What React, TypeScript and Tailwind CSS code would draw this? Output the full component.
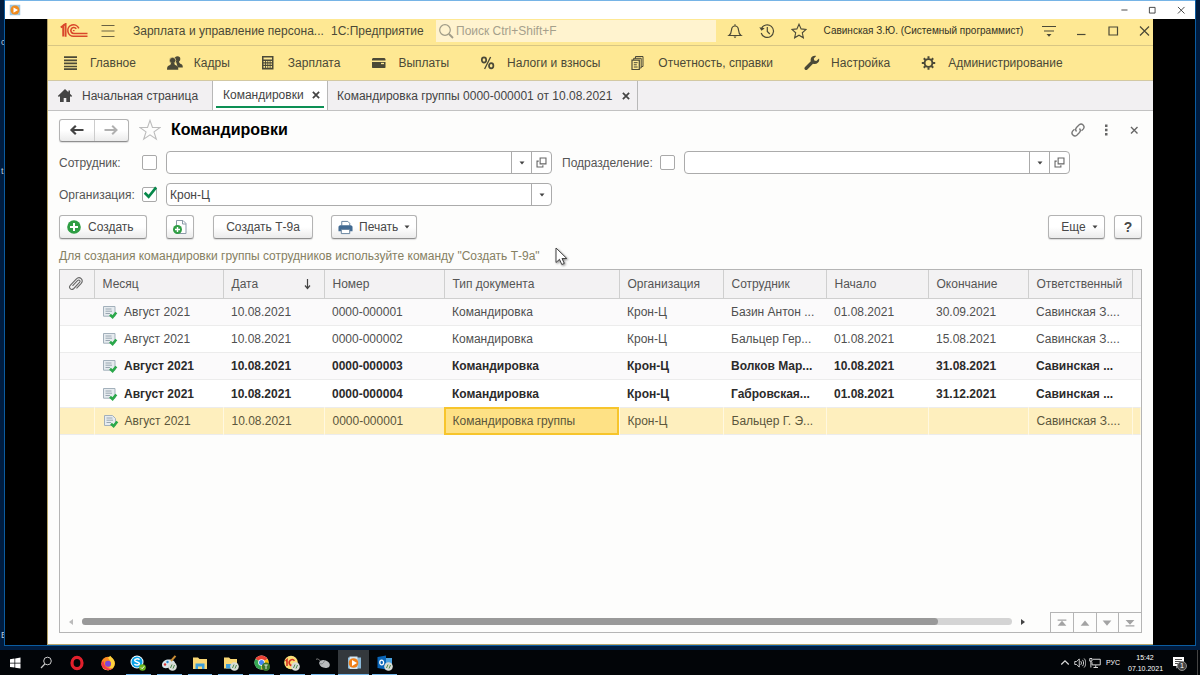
import React, { useState, ReactNode } from "react";

interface Trip {
  month: string;
  date: string;
  number: string;
  type: string;
  org: string;
  employee: string;
  start: string;
  end: string;
  owner: string;
  bold?: boolean;
  selected?: boolean;
}

const trips: Trip[] = [
  { month: "Август 2021", date: "10.08.2021", number: "0000-000001", type: "Командировка", org: "Крон-Ц", employee: "Базин Антон ...", start: "01.08.2021", end: "30.09.2021", owner: "Савинская З...." },
  { month: "Август 2021", date: "10.08.2021", number: "0000-000002", type: "Командировка", org: "Крон-Ц", employee: "Бальцер Гер...", start: "01.08.2021", end: "15.08.2021", owner: "Савинская З...." },
  { month: "Август 2021", date: "10.08.2021", number: "0000-000003", type: "Командировка", org: "Крон-Ц", employee: "Волков Мар...", start: "10.08.2021", end: "31.08.2021", owner: "Савинская ...", bold: true },
  { month: "Август 2021", date: "10.08.2021", number: "0000-000004", type: "Командировка", org: "Крон-Ц", employee: "Габровская...", start: "01.08.2021", end: "31.12.2021", owner: "Савинская ...", bold: true },
  { month: "Август 2021", date: "10.08.2021", number: "0000-000001", type: "Командировка группы", org: "Крон-Ц", employee: "Бальцер Г. Э...", start: "", end: "", owner: "Савинская З....", selected: true },
];

interface SvgProps {
  className?: string;
  children: ReactNode;
}

const Svg: React.FC<SvgProps> = ({ className = "size-4", children }) => (
  <svg viewBox="0 0 16 16" fill="none" className={`${className} shrink-0`} aria-hidden="true">
    {children}
  </svg>
);

const LogoIcon = () => (
  <svg viewBox="0 0 28 15" className="w-7 h-[15px] shrink-0" fill="none" stroke="#d9472b" strokeWidth="1.6" aria-label="1С">
    <path d="M.8 4.600 3.200 2.700v10.800M3.200 2.300 5.600 1v12.700" strokeWidth="1.900" />
    <path d="M18.800 5.400A5.700 5.700 0 1 0 14 13.200H27.500" />
    <path d="M16.300 5.800a3 3 0 1 0-2.500 4.700H27.500" />
    <path d="M14.600 7.600h-1.700" strokeWidth="1.200" />
  </svg>
);

const menuItems: { label: string; icon: ReactNode }[] = [
  {
    label: "Главное",
    icon: (
      <Svg>
        <path d="M1 2.200h13M1 5.300h13M1 8.400h13M1 11.500h13M1 14.200h13" stroke="#4b4937" strokeWidth="1.700" />
      </Svg>
    ),
  },
  {
    label: "Кадры",
    icon: (
      <Svg>
        <g fill="#4b4937">
          <circle cx="10.500" cy="4" r="2.800" />
          <path d="M8.800 6h3.200c0 2 .8 2.500 2.500 3.200 1 .5 1.300 1.500 1.300 3.300h-5z" />
          <circle cx="5.600" cy="5.500" r="3.200" stroke="#fee893" strokeWidth=".7" />
          <path d="M0 14.800c0-2.800.6-3.800 2-4.300 1.600-.5 2-1.200 2-2.500h3.300c0 1.300.4 2 2 2.500 1.500.5 2 1.500 2 4.300z" />
        </g>
      </Svg>
    ),
  },
  {
    label: "Зарплата",
    icon: (
      <Svg>
        <path d="M1 1h11.500v13.500H1z" fill="#4b4937" />
        <path d="M2.500 2.500h8.500v2H2.500zM2.500 6H4v1.300H2.500zM4.900 6h1.500v1.300H4.900zM7.200 6h1.500v1.300H7.200zM9.500 6H11v1.300H9.500zM2.500 8.400H4v1.300H2.500zM4.900 8.400h1.500v1.300H4.900zM7.200 8.400h1.500v1.300H7.200zM9.500 8.400H11v1.300H9.500zM2.500 11H4v1.800H2.500zM4.900 11h1.500v1.800H4.900zM7.200 11h1.500v1.800H7.200zM9.500 11H11v1.800H9.500z" fill="#fee893" />
      </Svg>
    ),
  },
  {
    label: "Выплаты",
    icon: (
      <Svg>
        <path d="M2 3h11.500l1 1v1.500H1V4zM1 7h13.500v5.500l-.5.500H1.500L1 12.500z" fill="#4b4937" />
        <path d="M10 8.500h3" stroke="#fee893" strokeWidth="1.300" />
      </Svg>
    ),
  },
  {
    label: "Налоги и взносы",
    icon: (
      <Svg>
        <g stroke="#4b4937">
          <ellipse cx="4" cy="5" rx="2.200" ry="2.600" strokeWidth="1.700" />
          <ellipse cx="11.200" cy="10.800" rx="2.200" ry="2.600" strokeWidth="1.700" />
          <path d="M10.600 2 4.600 14" strokeWidth="1.300" />
        </g>
      </Svg>
    ),
  },
  {
    label: "Отчетность, справки",
    icon: (
      <Svg>
        <path d="M4.500 3.500V1.500h7.500v10h-1.500M2.700 5V3.300h7.500v9.700h-1" stroke="#4b4937" />
        <path d="M1 5.200h7.300v9.300H1z" stroke="#4b4937" strokeWidth="1.200" />
        <path d="M2.800 7.700h3.800M2.800 9.800h3M2.800 12h3.800" stroke="#4b4937" />
      </Svg>
    ),
  },
  {
    label: "Настройка",
    icon: (
      <Svg>
        <path d="M15 3.500 12.300 6l-2-.5-.5-2L12.200 1C10 .4 7.300 1.300 6.700 4c-.2.900-.1 1.600.1 2.300L1 12c-.8.900-.7 1.800-.1 2.400.7.700 1.700.7 2.500 0l5.600-5.700c3.300 1 6-1.200 6.200-3.500.1-.7 0-1.200-.2-1.700z" fill="#4b4937" />
      </Svg>
    ),
  },
  {
    label: "Администрирование",
    icon: (
      <Svg>
        <g stroke="#4b4937">
          <circle cx="7.500" cy="8" r="3.900" strokeWidth="1.900" />
          <path d="M7.500 1.200v2.500M7.500 12.300v2.500M.8 8h2.500M11.700 8h2.500M2.800 3.300l1.700 1.700M10.500 11l1.700 1.700M2.800 12.700 4.500 11M10.500 5l1.700-1.700" strokeWidth="2" />
        </g>
      </Svg>
    ),
  },
];

const Caret = () => (
  <svg viewBox="0 0 6 4" className="w-[6px] h-1 shrink-0" aria-hidden="true">
    <path d="M.5.5h5L3 3.500z" fill="#444" />
  </svg>
);

const OpenIcon = () => (
  <Svg className="size-[11px]">
    <path d="M6 1.500h8.500v8.500H6z" stroke="#666" strokeWidth="1.600" />
    <path d="M4 6H1.500v8.500H10V12" stroke="#666" strokeWidth="1.600" />
  </Svg>
);

const DocIcon: React.FC<{ folded?: boolean }> = ({ folded }) => (
  <Svg>
    <path d={folded ? "M1.500 2.500h8l3 3v7h-11z" : "M1.500 2.500H13v9.700H1.500z"} fill="#e6ebef" stroke="#a3b0bb" />
    <path d="M3.500 5h6M3.500 7.200h6.500M3.500 9.500h4.500" stroke="#9aa7b2" />
    <path d="M8 10.700l2.600 2.400 3.700-4.600" stroke="#2ba84a" strokeWidth="2.600" />
  </Svg>
);

const buttonStyle =
  "flex items-center h-6 rounded-[3px] border border-[#b3b3b3] border-b-[#8f8f8f] bg-linear-to-b from-white from-50% to-[#ebebeb] text-[#484848] shadow-[0_1px_1px_#ddd]";

const CheckBox: React.FC<{ id: string; checked: boolean; onChange: () => void }> = ({ id, checked, onChange }) => (
  <span className="relative flex size-[15px]">
    <input
      id={id}
      type="checkbox"
      checked={checked}
      onChange={onChange}
      className="size-[15px] appearance-none rounded-[2px] border border-[#a9a9a9] bg-white"
    />
    {checked && (
      <svg viewBox="0 0 16 16" className="absolute -top-px left-px size-[15px] pointer-events-none" fill="none">
        <path d="M1.800 7.200 6 11.500 14 1.500" stroke="#06884a" strokeWidth="2.800" />
      </svg>
    )}
  </span>
);

const LookupField: React.FC<{ label: string }> = ({ label }) => (
  <div className="flex h-[23px] rounded-[4px] border border-[#ababab] bg-white">
    <input type="text" aria-label={label} className="flex-1 min-w-0 px-[3px] outline-none" />
    <button type="button" aria-label="Выбрать" className="w-5 flex items-center justify-center border-l border-[#ababab]">
      <Caret />
    </button>
    <button type="button" aria-label="Открыть" className="w-5 flex items-center justify-center border-l border-[#ababab]">
      <OpenIcon />
    </button>
  </div>
);

const TopBar = () => (
  <header className="flex items-center h-[27px] pl-3 pb-[3px] bg-[#fee893] border-b border-[#d8c684] text-[#4b4937]">
    <LogoIcon />
    <button type="button" aria-label="Меню" className="ml-3">
      <Svg>
        <path d="M1.500 2.500h13M1.500 8h13M1.500 13.500h13" stroke="#6a6243" strokeWidth="1.200" />
      </Svg>
    </button>
    <span className="ml-[17px] w-[198px] whitespace-nowrap">Зарплата и управление персона...</span>
    <span className="w-[105px] whitespace-nowrap">1С:Предприятие</span>
    <label className="flex flex-1 items-center h-[22px] bg-[#fff3cf] pl-[2px] gap-[2px]">
      <Svg>
        <circle cx="7" cy="7" r="5.300" stroke="#a09c88" strokeWidth="1.200" />
        <path d="m11 11 4 4" stroke="#a09c88" strokeWidth="1.800" />
      </Svg>
      <input type="text" placeholder="Поиск Ctrl+Shift+F" aria-label="Поиск" className="flex-1 min-w-0 outline-none placeholder:text-[#a5a08c]" />
    </label>
    <button type="button" aria-label="Уведомления" className="ml-[11px]">
      <Svg>
        <path d="M8 1.200v1.600M2 12.500c2-1.500 2.300-3 2.500-5.500.2-2.500 1.500-4 3.500-4s3.300 1.500 3.500 4c.2 2.500.5 4 2.500 5.500z" stroke="#4b4937" strokeWidth="1.200" />
        <path d="M6.500 13.500h3l-1.500 1.800z" fill="#4b4937" />
      </Svg>
    </button>
    <button type="button" aria-label="История" className="ml-4">
      <Svg>
        <path d="M2.500 5.500a6.300 6.300 0 1 1-.3 4.500M8.300 4v4.500l2.500 2.500" stroke="#4b4937" strokeWidth="1.200" />
        <path d="M.3 4.200 2.500 7.800l3.200-2.500z" fill="#4b4937" />
      </Svg>
    </button>
    <button type="button" aria-label="Избранное" className="ml-4">
      <Svg>
        <path d="m8 1.200 2.100 4.700 5 .5-3.800 3.400 1.100 5L8 12.200l-4.400 2.600 1.100-5L.9 6.400l5-.5z" stroke="#4b4937" strokeWidth="1.100" />
      </Svg>
    </button>
    <span className="ml-[11px] w-[211px] text-[10px] text-center text-[#333225] whitespace-nowrap">Савинская З.Ю. (Системный программист)</span>
    <button type="button" aria-label="Настройки панели" className="ml-3">
      <Svg>
        <path d="M1 3.500h14M3 8h10" stroke="#4b4937" strokeWidth="1.200" />
        <path d="M5.500 11h5L8 13.800z" fill="#4b4937" />
      </Svg>
    </button>
    <button type="button" aria-label="Свернуть" className="ml-4">
      <Svg>
        <path d="M4 11.500h8.500" stroke="#4b4937" strokeWidth="1.200" />
      </Svg>
    </button>
    <button type="button" aria-label="Развернуть" className="ml-4">
      <Svg>
        <path d="M4 4h8.500v8H4z" stroke="#4b4937" strokeWidth="1.200" />
      </Svg>
    </button>
    <button type="button" aria-label="Закрыть" className="ml-4">
      <Svg>
        <path d="m3 3.500 9 9M12 3.500l-9 9" stroke="#4b4937" strokeWidth="1.200" />
      </Svg>
    </button>
  </header>
);

const Tabs = () => (
  <div role="tablist" className="flex h-[30px] bg-[#f2f0f2] border-b border-[#c2c2c2] text-[#444]">
    <button type="button" role="tab" className="flex items-center gap-[9px] w-[165px] pl-[9px] border-r border-[#b8b8b8] whitespace-nowrap">
      <Svg>
        <path d="M8 1 .8 8l1.200 1 1-.9V14h3.700v-4h2.600v4H13V8.100l1 .9 1.200-1-2.200-2.200V2.500h-1.600v1.700z" fill="#444" />
      </Svg>
      Начальная страница
    </button>
    <button type="button" role="tab" aria-selected="true" className="flex w-[115px] px-[3px] bg-white border-r border-[#b8b8b8]">
      <span className="flex flex-1 items-center justify-between h-[27px] pt-[2px] pl-[7px] pr-[3px] border-b-2 border-[#0d9055] whitespace-nowrap">
        Командировки
        <Svg className="size-[10px]">
          <path d="m3 3 10 10M13 3 3 13" stroke="#444" strokeWidth="2.800" />
        </Svg>
      </span>
    </button>
    <button type="button" role="tab" className="flex items-center justify-between w-[310px] pl-[9px] pr-[6px] border-r border-[#b8b8b8] whitespace-nowrap">
      Командировка группы 0000-000001 от 10.08.2021
      <Svg className="size-[10px]">
        <path d="m3 3 10 10M13 3 3 13" stroke="#444" strokeWidth="2.800" />
      </Svg>
    </button>
  </div>
);

const TripTable = () => (
  <table className="w-full table-fixed border-collapse h-[165px] text-left whitespace-nowrap">
    <colgroup>
      <col className="w-[34px]" />
      <col className="w-[129px]" />
      <col className="w-[101px]" />
      <col className="w-[120px]" />
      <col className="w-[175px]" />
      <col className="w-[104px]" />
      <col className="w-[103px]" />
      <col className="w-[102px]" />
      <col className="w-[100px]" />
      <col className="w-[104px]" />
      <col />
    </colgroup>
    <thead>
      <tr className="bg-[#f3f2f3] text-[#555] [&>th]:h-7 [&>th]:p-0 [&>th]:pl-2 [&>th]:font-normal [&>th]:border-b [&>th]:border-r [&>th]:border-[#cfcfcf]">
        <th aria-label="Вложения">
          <Svg>
            <path d="m4.500 9.800 5-5.200c1.600-1.500 3.400.3 2 1.900l-5.700 6c-2.600 2.500-5.800-.8-3.300-3.400l5.700-6c3.600-3.500 8 1 4.800 4.500l-4.500 4.700" stroke="#666" strokeWidth="1.100" />
          </Svg>
        </th>
        <th>Месяц</th>
        <th>
          <span className="flex items-center justify-between pr-2">
            Дата
            <Svg>
              <path d="M7.500 3v9M5 9.500l2.500 3 2.500-3" stroke="#444" strokeWidth="1.200" />
            </Svg>
          </span>
        </th>
        <th>Номер</th>
        <th>Тип документа</th>
        <th>Организация</th>
        <th>Сотрудник</th>
        <th>Начало</th>
        <th>Окончание</th>
        <th>Ответственный</th>
        <th className="border-r-0!" />
      </tr>
    </thead>
    <tbody>
      {trips.map((trip, i) => (
        <tr
          key={i}
          className={`border-b border-[#ececec] [&>td]:p-0 [&>td]:pl-2 ${
            trip.selected ? "bg-[#feefbe] text-[#5b563c] [&>td]:border-r [&>td]:border-[#fff8e0]" : i % 2 ? "bg-white" : "bg-[#fbfafb]"
          } ${trip.bold ? "font-bold text-[#2b2b2b]" : "text-[#4f4f4f]"}`}>
          <td />
          <td>
            <span className="flex items-center gap-[6px]">
              <DocIcon folded={trip.selected} />
              {trip.month}
            </span>
          </td>
          <td>{trip.date}</td>
          <td>{trip.number}</td>
          <td className={trip.selected ? "bg-[#fee185] outline-2 -outline-offset-2 outline-[#f7c52c]" : ""}>{trip.type}</td>
          <td>{trip.org}</td>
          <td>{trip.employee}</td>
          <td>{trip.start}</td>
          <td>{trip.end}</td>
          <td>{trip.owner}</td>
          <td />
        </tr>
      ))}
    </tbody>
  </table>
);

const pagerIcons: { label: string; d: string }[] = [
  { label: "В начало", d: "M3 4h10v1.500H3zM8 5.500l5 5.500H3z" },
  { label: "Вверх", d: "M8 5l5 6H3z" },
  { label: "Вниз", d: "M3 5h10l-5 6z" },
  { label: "В конец", d: "M3 4.500h10l-5 5.500zM3 10.500h10V12H3z" },
];

const TableFooter = () => (
  <div className="flex items-stretch h-5">
    <div className="flex flex-1 items-center gap-[9px] pl-2 pr-[24px] pb-[1px]">
      <svg viewBox="0 0 5 6" className="w-[5px] h-[6px]">
        <path d="M5 0v6L1 3z" fill="#bbb" />
      </svg>
      <div className="flex-1 h-[7px] rounded-full bg-[#d4d4d4]">
        <div className="h-full w-[92%] rounded-full bg-[#999]" />
      </div>
      <svg viewBox="0 0 5 6" className="w-[5px] h-[6px]">
        <path d="M0 0v6l4-3z" fill="#444" />
      </svg>
    </div>
    <div className="grid grid-cols-4 w-[91px] border-t border-[#b5b5b5]">
      {pagerIcons.map((p) => (
        <button key={p.label} type="button" aria-label={p.label} className="flex items-center justify-center border-l border-[#b5b5b5]">
          <Svg className="size-[14px]">
            <path d={p.d} fill="#a3a3a3" />
          </Svg>
        </button>
      ))}
    </div>
  </div>
);

const TripsPage = () => {
  const [filters, setFilters] = useState({ employee: false, department: false, org: true });

  const toggle = (name: "employee" | "department" | "org"): void => {
    setFilters((prev) => ({ ...prev, [name]: !prev[name] }));
  };

  return (
    <main className="flex flex-col flex-1 min-h-0 px-[11px] pt-[7px] pb-[11px] bg-[#fdfdfc]">
      <div className="flex items-center h-6">
        <div className="flex w-[70px] h-[23px] rounded-[3px] border border-[#b3b3b3] border-b-[#8f8f8f] bg-linear-to-b from-white from-50% to-[#ebebeb] shadow-[0_1px_1px_#ddd]">
          <button type="button" aria-label="Назад" className="flex flex-1 items-center justify-center border-r border-[#ccc]">
            <Svg>
              <path d="M2.500 8h12M6.800 3.800 2.500 8l4.300 4.200" stroke="#444" strokeWidth="2.200" />
            </Svg>
          </button>
          <button type="button" aria-label="Вперед" className="flex flex-1 items-center justify-center">
            <Svg>
              <path d="M1.500 8h12M9.200 3.800 13.500 8l-4.300 4.200" stroke="#b0b0b0" strokeWidth="2" />
            </Svg>
          </button>
        </div>
        <button type="button" aria-label="В избранное" className="ml-[10px]">
          <Svg className="size-[22px]">
            <path d="m8 1 1.800 5.200h5.500L10.900 9.400l1.700 5.300L8 11.500l-4.600 3.200 1.700-5.300L.7 6.200h5.500z" stroke="#bcbcbc" strokeWidth=".8" />
          </Svg>
        </button>
        <h1 className="flex-1 ml-[10px] text-[16px] font-bold text-black">Командировки</h1>
        <button type="button" aria-label="Ссылка">
          <Svg>
            <path d="M6.500 9.500a3 3 0 0 1 0-4L9.200 2.700a3 3 0 0 1 4.200 4.200L11.500 8.800M9.500 6.500a3 3 0 0 1 0 4l-2.700 2.800a3 3 0 0 1-4.200-4.200L4.500 7.200" stroke="#777" strokeWidth="1.300" />
          </Svg>
        </button>
        <button type="button" aria-label="Действия" className="ml-3">
          <Svg>
            <path d="M7 2.500h2.500V5H7zM7 6.800h2.500v2.500H7zM7 11h2.500v2.500H7z" fill="#666" />
          </Svg>
        </button>
        <button type="button" aria-label="Закрыть форму" className="ml-3">
          <Svg>
            <path d="m5 5 6.500 6.500M11.500 5 5 11.500" stroke="#666" strokeWidth="1.400" />
          </Svg>
        </button>
      </div>

      <div className="grid grid-cols-[83px_24px_1fr_108px_24px_1fr] items-center gap-y-[9px] mt-[9px] pr-[72px] text-[#555]">
        <label htmlFor="employee">Сотрудник:</label>
        <CheckBox id="employee" checked={filters.employee} onChange={() => toggle("employee")} />
        <LookupField label="Сотрудник" />
        <label htmlFor="department" className="pl-[10px]">
          Подразделение:
        </label>
        <CheckBox id="department" checked={filters.department} onChange={() => toggle("department")} />
        <LookupField label="Подразделение" />

        <label htmlFor="org" className="whitespace-nowrap">Организация:</label>
        <CheckBox id="org" checked={filters.org} onChange={() => toggle("org")} />
        <div className="relative h-[23px]">
          <select aria-label="Организация" className="w-full h-[23px] appearance-none rounded-[4px] border border-[#ababab] bg-white px-[3px] text-[#444]">
            <option>Крон-Ц</option>
          </select>
          <span className="absolute right-0 top-0 flex items-center justify-center w-[21px] h-[23px] border-l border-[#ababab] pointer-events-none">
            <Caret />
          </span>
        </div>
      </div>

      <div className="flex items-center mt-[9px]">
        <button type="button" className={`${buttonStyle} w-[88px] pl-[6px] gap-[6px]`}>
          <Svg>
            <circle cx="8" cy="8" r="6.800" fill="#2f9e44" />
            <path d="M8 4v8M4 8h8" stroke="#fff" strokeWidth="2" />
          </Svg>
          Создать
        </button>
        <button type="button" aria-label="Скопировать" className={`${buttonStyle} w-7 justify-center ml-[19px]`}>
          <Svg>
            <path d="M4.500 1.500h6.500l3 3v10H4.500z" fill="#fff" stroke="#8b9aa8" />
            <path d="M10.500 1.500V5H14" stroke="#8b9aa8" />
            <circle cx="5.500" cy="10.500" r="4.500" fill="#2f9e44" />
            <path d="M5.500 8v5M3 10.500h5" stroke="#fff" strokeWidth="1.400" />
          </Svg>
        </button>
        <button type="button" className={`${buttonStyle} w-[100px] justify-center ml-[19px]`}>
          Создать Т-9а
        </button>
        <button type="button" className={`${buttonStyle} w-[86px] pl-[6px] gap-[6px] ml-[18px]`}>
          <Svg className="size-[15px]">
            <path d="M4 6V1.500h6.500l2 2V6" fill="#fff" stroke="#5f7d9a" />
            <path d="M2 5.500h12l1.500 1.500v5h-15V7z" fill="#426a92" />
            <path d="M3.500 10h9v4.500h-9z" fill="#fff" stroke="#5f7d9a" />
          </Svg>
          Печать
          <Caret />
        </button>
        <button type="button" className={`${buttonStyle} w-[57px] justify-center gap-[6px] pl-[6px] ml-auto`}>
          Еще
          <Caret />
        </button>
        <button type="button" aria-label="Справка" className={`${buttonStyle} w-7 justify-center ml-[9px] text-[14px] font-bold`}>
          ?
        </button>
      </div>

      <p className="mt-[9px] mb-1 h-[17px] leading-[17px] text-[#858062]">
        <span className="relative">
          Для создания командировки группы сотрудников используйте команду "Создать Т-9а"
          <svg viewBox="0 0 14 20" className="absolute left-full top-0 ml-[15px] -mt-[2px] w-[14px] h-5 drop-shadow-[1px_1px_1px_#888]" aria-hidden="true">
            <path d="M1 1v14.500l3.500-3.200 2.300 5.200 2.500-1.100L7 11.500h4.800z" fill="#fff" stroke="#444" />
          </svg>
        </span>
      </p>

      <div className="flex flex-col flex-1 min-h-0 border border-[#b5b5b5]">
        <div className="flex-1 min-h-0 overflow-hidden">
          <TripTable />
        </div>
        <TableFooter />
      </div>
    </main>
  );
};

const RemoteBadge = () => (
  <>
    <circle cx="11.500" cy="11.500" r="4.300" fill="#d8dcd6" />
    <path d="m9.500 13 1.500-3.500M12 13.500l1.500-3.500" stroke="#4a8a4a" />
  </>
);

const taskIcons: { label: string; state?: "open" | "active"; icon: ReactNode }[] = [
  {
    label: "Пуск",
    icon: <path d="M3 4.200 7.500 3.500v4.200H3zM8.200 3.400 13.500 2.600v5.100H8.200zM3 8.400h4.500v4.200L3 12zM8.200 8.400h5.300v5.100l-5.300-.8z" fill="#fff" />,
  },
  {
    label: "Поиск",
    icon: (
      <>
        <circle cx="9.500" cy="6" r="3.800" stroke="#ccc" />
        <path d="M6.800 9 3 13" stroke="#ccc" strokeWidth="1.200" />
      </>
    ),
  },
  { label: "Opera", icon: <ellipse cx="8" cy="8" rx="5" ry="5.600" stroke="#e0202c" strokeWidth="3.200" /> },
  {
    label: "Firefox",
    icon: (
      <>
        <circle cx="8" cy="8.500" r="6.800" fill="#fb8a22" />
        <path d="M8 2.500 10.500.8c.5 2 4.500 3 4.300 8A7 7 0 0 1 2 12c3 3 9 2 9-3 0-3-2-3.500-3-6.500z" fill="#ffd23e" />
        <path d="M1.500 10a6.800 6.800 0 0 0 11 3.500C9 14 4 13 3.500 6 2 7 1.300 8.500 1.500 10z" fill="#f5374a" />
        <circle cx="8" cy="8.800" r="3" fill="#7f48d8" />
      </>
    ),
  },
  {
    label: "Skype",
    state: "open",
    icon: (
      <>
        <circle cx="7" cy="7" r="6.500" fill="#fff" />
        <circle cx="7" cy="7" r="5.500" fill="#0aa3e6" />
        <path d="M9.500 4.800C8 3.300 4.500 3.700 4.700 5.500c.2 1.700 4.800 1.200 4.700 3.100-.1 1.700-3.500 2-5 .3" stroke="#fff" strokeWidth="1.500" />
        <circle cx="12.500" cy="12.500" r="3.300" fill="#6bb41c" />
        <path d="m11 12.500 1.200 1.200 2-2.400" stroke="#fff" />
      </>
    ),
  },
  {
    label: "Рисование",
    state: "open",
    icon: (
      <>
        <path d="M1 10c0-4 4-6 8-5.500s6 3 5 6-4 1-6 2-7 1.500-7-2.500z" fill="#d6e4ea" />
        <path d="M10 6 14.500.8" stroke="#c98d35" strokeWidth="2" />
        <circle cx="4" cy="9.500" r="1.200" fill="#d33" />
        <circle cx="6.500" cy="7" r="1.200" fill="#2a8ad0" />
        <RemoteBadge />
      </>
    ),
  },
  {
    label: "Проводник",
    state: "open",
    icon: (
      <>
        <path d="M1 2.500h5l1.500 1.500H15v10H1z" fill="#f9d774" />
        <path d="M3.500 8.500h9V14H10v-2.500H6V14H3.500z" fill="#3d9fdb" />
      </>
    ),
  },
  {
    label: "Папка",
    state: "open",
    icon: (
      <>
        <path d="M1 2.500h5l1.500 1.500H14v9.500H1z" fill="#f9d774" />
        <path d="M3 9h6v4.500H3z" fill="#3d9fdb" />
        <RemoteBadge />
      </>
    ),
  },
  {
    label: "Chrome",
    state: "open",
    icon: (
      <>
        <circle cx="7.500" cy="7.500" r="7" fill="#e8eaed" />
        <path d="M1.400 4A7 7 0 0 1 13.600 4L7.500 7.500z" fill="#ea4335" />
        <path d="M1.400 4A7 7 0 0 0 7.500 14.500V7.500z" fill="#34a853" />
        <path d="M13.600 4a7 7 0 0 1-6.100 10.500V7.500z" fill="#fbbc05" />
        <circle cx="7.500" cy="7.500" r="3.300" fill="#fff" />
        <circle cx="7.500" cy="7.500" r="2.500" fill="#4285f4" />
        <circle cx="12" cy="11.800" r="4.200" fill="#38752c" />
        <path d="M10.300 10h3.400M12 10v4" stroke="#dfeadb" />
      </>
    ),
  },
  {
    label: "1С",
    state: "open",
    icon: (
      <>
        <circle cx="7" cy="7.500" r="6.800" fill="#fbdf78" />
        <path d="m1.500 6 1.500-1.300V11M10.500 5.700A3 3 0 1 0 9 10.500H12" stroke="#d42f20" strokeWidth="1.600" />
        <RemoteBadge />
      </>
    ),
  },
  {
    label: "Мышь",
    state: "open",
    icon: (
      <>
        <path d="M1 4.500c2-1.500 3 .5 5 2" stroke="#888" />
        <ellipse cx="9.500" cy="9" rx="5.500" ry="3.800" fill="#b9bcbe" transform="rotate(20 9.500 9)" />
        <path d="M5 8.500c2 1 3.500 0 4.500-3" stroke="#6f7375" strokeWidth=".8" />
      </>
    ),
  },
  {
    label: "Проигрыватель",
    state: "active",
    icon: (
      <>
        <path d="M2 2.500h13v11H2z" fill="#8ab9d8" />
        <path d="M3.500 1.500h8v12.500h-8z" fill="#d5e7f2" />
        <circle cx="7.500" cy="8" r="4.800" fill="#f08019" />
        <path d="m6 5 5 3-5 3z" fill="#fff" />
      </>
    ),
  },
  {
    label: "Outlook",
    state: "open",
    icon: (
      <>
        <path d="M7 3h8v8H7z" fill="#4ba3e0" />
        <path d="M.5 2 9 .5v14L.5 13z" fill="#0a66b8" />
        <ellipse cx="4.700" cy="7.500" rx="1.900" ry="2.400" stroke="#fff" strokeWidth="1.300" />
        <RemoteBadge />
      </>
    ),
  },
];

const Taskbar = () => (
  <footer className="flex h-[25px] bg-[#020508] text-white">
    <nav className="grid grid-cols-13 w-[400px]">
      {taskIcons.map((t) => (
        <button
          key={t.label}
          type="button"
          aria-label={t.label}
          className={`relative flex items-center justify-center ${t.state === "active" ? "bg-[#34393d]" : ""}`}>
          <Svg>{t.icon}</Svg>
          {t.state && (
            <span className={`absolute bottom-0 h-px bg-[#76b9ed] ${t.state === "active" ? "inset-x-0" : "inset-x-[3px]"}`} />
          )}
        </button>
      ))}
    </nav>
    <div className="flex items-center ml-auto">
      <Svg className="size-3">
        <path d="m3 10 5-5 5 5" stroke="#ddd" strokeWidth="1.600" />
      </Svg>
      <Svg className="size-3 ml-[3px]">
        <path d="M1 6h2.500L7 2.500v11L3.500 10H1zM9 5.500c1.200 1.500 1.200 3.500 0 5M11.300 3.800c2 2.500 2 5.900 0 8.400M13.500 2c3 3.500 3 8.500 0 12" stroke="#ddd" strokeWidth="1.200" />
      </Svg>
      <Svg className="size-3 ml-[3px]">
        <path d="M5 3h10v7.500H4V7M9 11v3M6 14h6M1 2h3v3.500H1zM2.500 5.500V14" stroke="#ddd" strokeWidth="1.300" />
      </Svg>
      <span className="ml-[5px] w-[22px] text-[7px]">РУС</span>
      <time className="w-[34px] text-[7px] leading-[11px] text-center whitespace-nowrap">
        15:42
        <br />
        07.10.2021
      </time>
      <span className="relative ml-[9px] mr-[10px] flex">
        <Svg>
          <path d="M2 2h11v9H8l-2.500 2.500V11H2z" fill="#fff" />
          <path d="M4 4.500h7M4 6.500h7M4 8.500h4" stroke="#222" strokeWidth=".8" />
        </Svg>
        <span className="absolute left-[6px] top-[6px] flex items-center justify-center size-[10px] rounded-full bg-[#444] border border-[#888] text-[7px]">1</span>
      </span>
      <span className="w-px h-full bg-[#444]" />
      <span className="w-[2px]" />
    </div>
  </footer>
);

const TitleBar = () => (
  <div className="flex items-center h-[19px] pl-1 pr-[7px] bg-white border-t border-[#76b4e6]">
    <Svg className="size-3">
      <path d="M1 1h14v14H1z" fill="#9cc6e2" />
      <circle cx="8" cy="8" r="6" fill="#f08a1d" />
      <path d="m6 4.500 6 3.500-6 3.500z" fill="#fff" />
    </Svg>
    <button type="button" aria-label="Свернуть окно" className="ml-auto">
      <Svg className="size-[14px]">
        <path d="M5 8h7" stroke="#333" />
      </Svg>
    </button>
    <button type="button" aria-label="Развернуть окно" className="ml-[14px]">
      <Svg className="size-[14px]">
        <path d="M5 5h6.500v6.500H5z" stroke="#333" />
      </Svg>
    </button>
    <button type="button" aria-label="Закрыть окно" className="ml-[15px]">
      <Svg className="size-[14px]">
        <path d="m4.500 4.500 7.500 7.500M12 4.500 4.500 12" stroke="#333" />
      </Svg>
    </button>
  </div>
);

const App: React.FC = () => (
  <div className="flex flex-col h-screen overflow-hidden bg-[#001c3f] font-[Liberation_Sans,Arial,sans-serif] text-[12px] leading-4">
    <div className="relative flex flex-1 min-h-0 pl-1 pr-1 pb-1">
      <span className="absolute left-px top-[34px] text-[9px] text-[#b9c6d6]">с</span>
      <span className="absolute left-px top-[163px] text-[9px] text-[#b9c6d6]">t</span>
      <span className="absolute left-px top-[627px] text-[9px] text-[#b9c6d6]">Е</span>
      <div className="relative flex flex-col flex-1 min-w-0 border-x border-b border-[#0b5ca0] bg-black">
        <TitleBar />
        <div className="flex flex-col flex-1 min-h-0 mx-[42px] border-l border-b border-[#b5a368]">
          <TopBar />
          <nav className="flex items-center gap-[31px] h-[35px] pl-[15px] bg-[#fee893] border-b border-[#d3c9a3] text-[#4b4937]">
            {menuItems.map((item) => (
              <a key={item.label} href="#" className="flex items-center gap-[11px] whitespace-nowrap">
                {item.icon}
                {item.label}
              </a>
            ))}
          </nav>
          <Tabs />
          <TripsPage />
        </div>
      </div>
    </div>
    <Taskbar />
  </div>
);

export default App;
